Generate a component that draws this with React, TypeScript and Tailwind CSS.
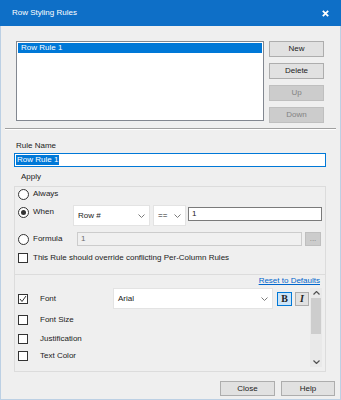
import React from "react";

function Chevron() {
  return (
    <svg width="7" height="4" viewBox="0 0 7 4" className="shrink-0">
      <polyline points="0.5,0.5 3.5,3.5 6.5,0.5" fill="none" stroke="#7a7a7a" strokeWidth="1" />
    </svg>
  );
}

function Btn({ label, disabled = false, className = "" }: { label: string; disabled?: boolean; className?: string }) {
  return (
    <div
      className={`flex items-center justify-center border ${
        disabled ? "border-[#bfbfbf] bg-[#cccccc] text-[#838383]" : "border-[#adadad] bg-[#e1e1e1] text-[#222222]"
      } ${className}`}
    >
      {label}
    </div>
  );
}

function Radio({ checked = false }: { checked?: boolean }) {
  return (
    <span className="flex h-[11px] w-[11px] shrink-0 items-center justify-center rounded-full border border-[#333333] bg-white">
      {checked && <span className="h-[5px] w-[5px] rounded-full bg-[#333333]" />}
    </span>
  );
}

function Check({ checked = false }: { checked?: boolean }) {
  return (
    <span className="flex h-[10px] w-[10px] shrink-0 items-center justify-center border border-[#333333] bg-white">
      {checked && (
        <svg width="8" height="8" viewBox="0 0 8 8">
          <polyline points="1,4 3,6.5 7,1" fill="none" stroke="#333333" strokeWidth="1" />
        </svg>
      )}
    </span>
  );
}

function Combo({ text, className = "" }: { text: string; className?: string }) {
  return (
    <div className={`flex h-[21px] shrink-0 items-center justify-between border border-[#e3e3e3] bg-white pl-[4px] pr-[4px] ${className}`}>
      <span>{text}</span>
      <Chevron />
    </div>
  );
}

export default function App() {
  return (
    <div className="flex h-[400px] w-[341px] flex-col border-x border-b border-[#bcd0e4] bg-[#efefef] font-['Liberation_Sans',Arial,sans-serif] text-[8px] leading-[10px] text-[#222222]">
      {/* title bar */}
      <div className="-mx-px flex h-[26px] shrink-0 items-center justify-between bg-[#0e6fc7] pl-[12px] pr-[12px] text-white">
        <span>Row Styling Rules</span>
        <svg width="7" height="7" viewBox="0 0 7 7">
          <path d="M0.8 0.8 L6.2 6.2 M6.2 0.8 L0.8 6.2" stroke="white" strokeWidth="1.8" />
        </svg>
      </div>

      {/* rule list + buttons */}
      <div className="flex gap-[5px] pl-[15px] pt-[15px]">
        <div className="h-[80px] w-[248px] border border-[#828790] bg-white p-px">
          <div className="flex h-[10px] items-center bg-[#0078d7] pl-[3px] text-white">Row Rule 1</div>
        </div>
        <div className="flex w-[55px] flex-col gap-[6px]">
          <Btn label="New" className="h-[16px]" />
          <Btn label="Delete" className="h-[16px]" />
          <Btn label="Up" disabled className="h-[16px]" />
          <Btn label="Down" disabled className="h-[16px]" />
        </div>
      </div>

      <div className="mx-[4px] mt-[5px] border-y border-t-[#a0a0a0] border-b-white" />

      {/* rule name */}
      <div className="ml-[15px] mt-[11px]">Rule Name</div>
      <div className="ml-[13px] mt-[2px] flex h-[14px] w-[312px] items-center border border-[#0078d7] bg-white pl-px">
        <span className="bg-[#0078d7] px-px text-white">Row Rule 1</span>
      </div>

      {/* apply group */}
      <div className="ml-[20px] mt-[5px]">Apply</div>
      <div className="ml-[13px] mt-[4px] flex h-[186px] w-[312px] flex-col border border-[#dcdcdc]">
        <div className="flex h-[14px] items-center gap-[4px] pl-[3px]">
          <Radio />
          Always
        </div>
        <div className="mt-[4px] flex items-start">
          <div className="flex h-[14px] w-[58px] items-center gap-[4px] pl-[3px]">
            <Radio checked />
            When
          </div>
          <Combo text="Row #" className="w-[77px]" />
          <Combo text="==" className="ml-[3px] w-[33px]" />
          <div className="ml-[2px] mt-[2px] flex h-[14px] w-[134px] items-center border border-[#7a7a7a] bg-white pl-[3px]">1</div>
        </div>
        <div className="mt-[6px] flex h-[14px] items-center">
          <div className="flex w-[62px] items-center gap-[4px] pl-[3px]">
            <Radio />
            Formula
          </div>
          <div className="flex h-[14px] w-[225px] items-center border border-[#cccccc] bg-[#f0f0f0] pl-[3px] text-[#6d6d6d]">1</div>
          <div className="ml-[3px] flex h-[14px] w-[16px] items-center justify-center border border-[#bfbfbf] bg-[#cccccc] text-[#838383]">...</div>
        </div>
        <div className="mt-[6px] flex h-[11px] items-center gap-[5px] pl-[3px]">
          <Check />
          This Rule should override conflicting Per-Column Rules
        </div>

        <div className="mt-[11px] border-t border-[#dcdcdc]" />

        <div className="mt-px flex h-[10px] justify-end pr-[5px]">
          <span className="text-[#0066cc] underline">Reset to Defaults</span>
        </div>

        <div className="mt-[2px] flex">
          <div className="flex w-[295px] flex-col">
            <div className="flex h-[21px] items-center">
              <div className="flex w-[98px] items-center gap-[12px] pl-[3px]">
                <Check checked />
                Font
              </div>
              <Combo text="Arial" className="w-[160px]" />
              <div className="ml-[4px] flex h-[14px] w-[15px] items-center justify-center border border-[#0078d7] bg-[#cce4f7] font-['Liberation_Serif',serif] text-[10px] font-bold">
                B
              </div>
              <div className="ml-[3px] flex h-[14px] w-[14px] items-center justify-center border border-[#adadad] bg-[#e1e1e1] font-['Liberation_Serif',serif] text-[10px] font-bold italic">
                I
              </div>
            </div>
            <div className="mt-[4px] flex h-[14px] items-center gap-[12px] pl-[3px]">
              <Check />
              Font Size
            </div>
            <div className="mt-[5px] flex h-[14px] items-center gap-[12px] pl-[3px]">
              <Check />
              Justification
            </div>
            <div className="mt-[3px] flex h-[14px] items-center gap-[12px] pl-[3px]">
              <Check />
              Text Color
            </div>
          </div>
          <div className="flex h-[79px] w-[12px] flex-col items-center bg-[#e9e9e9]">
            <div className="flex h-[10px] items-center">
              <svg width="7" height="4" viewBox="0 0 7 4">
                <polyline points="0.5,3.5 3.5,0.5 6.5,3.5" fill="none" stroke="#505050" strokeWidth="1.2" />
              </svg>
            </div>
            <div className="h-[36px] w-[10px] bg-[#cdcdcd]" />
            <div className="flex-1" />
            <div className="flex h-[10px] items-center">
              <svg width="7" height="4" viewBox="0 0 7 4">
                <polyline points="0.5,0.5 3.5,3.5 6.5,0.5" fill="none" stroke="#505050" strokeWidth="1.2" />
              </svg>
            </div>
          </div>
        </div>
      </div>

      {/* footer */}
      <div className="mt-[9px] flex justify-end gap-[6px] pr-[5px]">
        <Btn label="Close" className="h-[15px] w-[55px]" />
        <Btn label="Help" className="h-[15px] w-[54px]" />
      </div>
    </div>
  );
}
